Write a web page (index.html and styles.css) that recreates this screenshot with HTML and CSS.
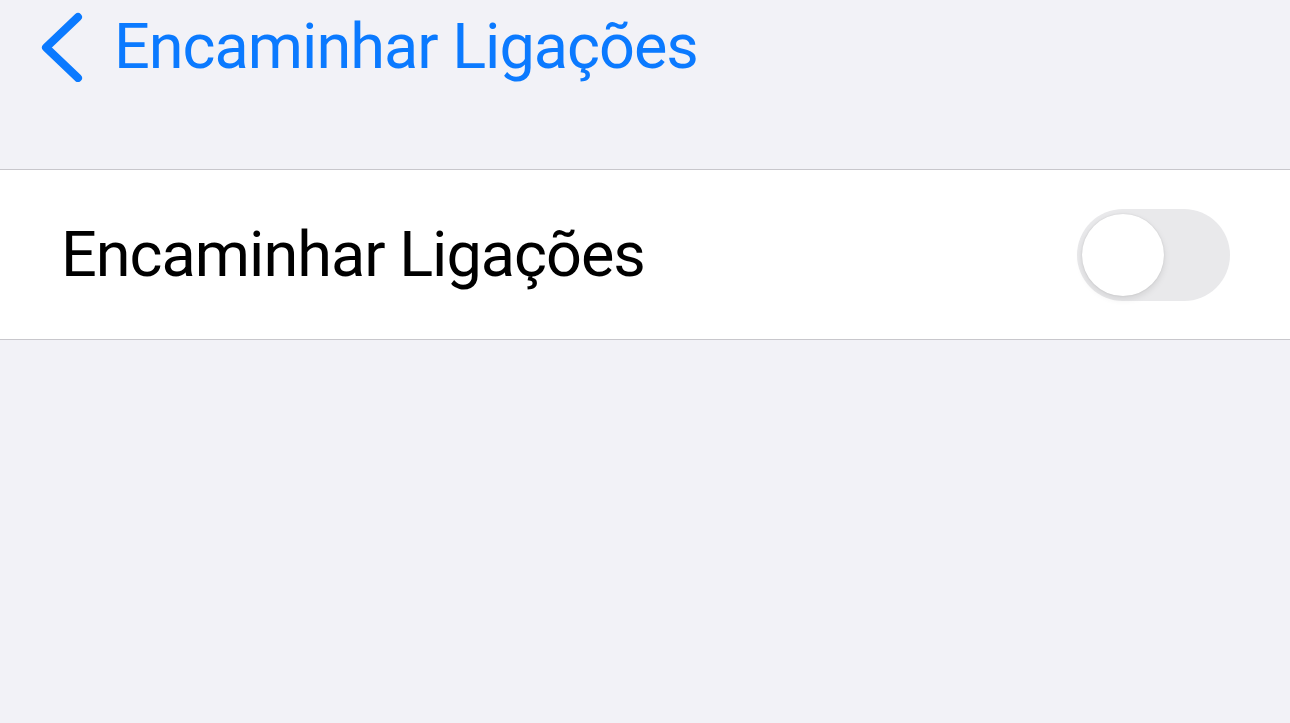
FILE: index.html
```html
<!DOCTYPE html>
<html lang="pt">
<head>
    <meta charset="UTF-8">
    <meta name="viewport" content="width=device-width, initial-scale=1.0">
    <title>Encaminhar Ligações</title>
    <link rel="stylesheet" href="styles.css">
</head>
<body>
    <div class="nav-bar">
        <a class="back-button" href="#">
            <svg class="chevron" width="50" height="70" viewBox="0 0 50 70">
                <path d="M42 5 L10 35.5 L42 66" fill="none" stroke="#0b7aff" stroke-width="8" stroke-linecap="round" stroke-linejoin="round"/>
            </svg>
            <span class="back-label">Encaminhar Ligações</span>
        </a>
    </div>

    <div class="group">
        <div class="cell">
            <span class="cell-label">Encaminhar Ligações</span>
            <div class="switch">
                <div class="knob"></div>
            </div>
        </div>
    </div>
</body>
</html>
```

FILE: styles.css
```css
body {
    margin: 0;
    padding: 0;
    height: 100vh;
    overflow: hidden;
    background-color: #f2f2f7;
    font-family: Roboto, "Liberation Sans", sans-serif;
}
.nav-bar {
    height: 169px;
    box-sizing: border-box;
    padding: 10px 0 0 36px;
}
.back-button {
    display: flex;
    align-items: center;
    gap: 28px;
    text-decoration: none;
}
.chevron {
    display: block;
}
.back-label {
    font-size: 63px;
    line-height: 74px;
    color: #0b7aff;
    letter-spacing: -1px;
}
.group {
    background-color: #fff;
    border-top: 1px solid #c8c7cc;
    border-bottom: 1px solid #c8c7cc;
}
.cell {
    height: 169px;
    display: flex;
    align-items: center;
    justify-content: space-between;
    padding: 0 60px 0 61px;
}
.cell-label {
    font-size: 63px;
    color: #000;
    letter-spacing: -1px;
}
.switch {
    width: 153px;
    height: 92px;
    border-radius: 46px;
    background-color: #e9e9eb;
    padding: 5px;
    box-sizing: border-box;
}
.knob {
    width: 82px;
    height: 82px;
    border-radius: 50%;
    background-color: #fff;
    box-shadow: 0 3px 7px rgba(0,0,0,0.1), 0 0 2px rgba(0,0,0,0.1);
}
```
